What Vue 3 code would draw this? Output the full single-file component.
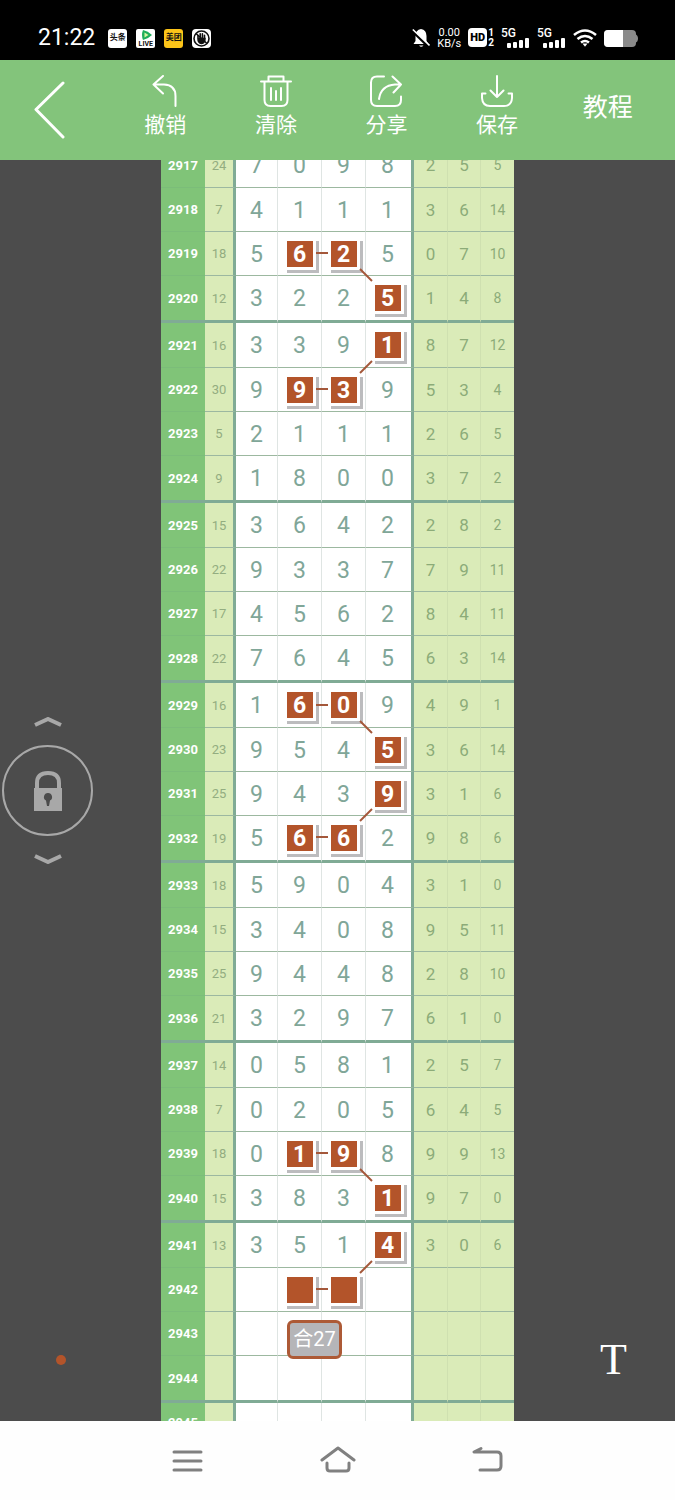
<script setup>
import { computed, ref } from 'vue'

const locked = ref(true)

// issue, sum, four drawn numbers, three side numbers
const draws = [
  ['2917', '24', '7098', ['2', '5', '5']],
  ['2918', '7', '4111', ['3', '6', '14']],
  ['2919', '18', '5625', ['0', '7', '10']],
  ['2920', '12', '3225', ['1', '4', '8']],
  ['2921', '16', '3391', ['8', '7', '12']],
  ['2922', '30', '9939', ['5', '3', '4']],
  ['2923', '5', '2111', ['2', '6', '5']],
  ['2924', '9', '1800', ['3', '7', '2']],
  ['2925', '15', '3642', ['2', '8', '2']],
  ['2926', '22', '9337', ['7', '9', '11']],
  ['2927', '17', '4562', ['8', '4', '11']],
  ['2928', '22', '7645', ['6', '3', '14']],
  ['2929', '16', '1609', ['4', '9', '1']],
  ['2930', '23', '9545', ['3', '6', '14']],
  ['2931', '25', '9439', ['3', '1', '6']],
  ['2932', '19', '5662', ['9', '8', '6']],
  ['2933', '18', '5904', ['3', '1', '0']],
  ['2934', '15', '3408', ['9', '5', '11']],
  ['2935', '25', '9448', ['2', '8', '10']],
  ['2936', '21', '3297', ['6', '1', '0']],
  ['2937', '14', '0581', ['2', '5', '7']],
  ['2938', '7', '0205', ['6', '4', '5']],
  ['2939', '18', '0198', ['9', '9', '13']],
  ['2940', '15', '3831', ['9', '7', '0']],
  ['2941', '13', '3514', ['3', '0', '6']],
  ['2942', '', '    ', ['', '', '']],
  ['2943', '', '    ', ['', '', '']],
  ['2944', '', '    ', ['', '', '']],
  ['2945', '', '    ', ['', '', '']]
]

// each trail is a list of [row, column] cells joined by short lines
const trails = [
  [[2, 1], [2, 2], [3, 3]],
  [[4, 3], [5, 2], [5, 1]],
  [[12, 1], [12, 2], [13, 3]],
  [[14, 3], [15, 2], [15, 1]],
  [[22, 1], [22, 2], [23, 3]],
  [[24, 3], [25, 2], [25, 1]]
]

const marked = new Set(trails.flat().map(([r, c]) => `${r}-${c}`))
const isMarked = (r, c) => marked.has(`${r}-${c}`)

const centerX = (c) => 95 + c * 44
const centerY = (r) => Math.floor(r / 4) * 180 + 22 + (r % 4) * 44

const links = computed(() =>
  trails.flatMap((t) =>
    t.slice(1).map(([r, c], i) => {
      const [pr, pc] = t[i]
      const mx = (centerX(c) + centerX(pc)) / 2
      const my = (centerY(r) + centerY(pr)) / 2
      const dx = 6 * Math.sign(c - pc)
      const dy = 6 * Math.sign(r - pr)
      return { x1: mx - dx, y1: my - dy, x2: mx + dx, y2: my + dy }
    })
  )
)
</script>

<template>
  <div class="screen">
    <header class="status">
      <div class="status-left">
        <span class="clock">21:22</span>
        <span class="app app-news">头条</span>
        <span class="app app-live">
          <svg viewBox="0 0 18 12" width="18" height="12">
            <path d="M6 1Q4 6 6 11Q11 10 15 6Q11 2 6 1Z" fill="#1fae5b" />
            <path d="M7.500 3.500V8.500L11.500 6Z" fill="#d8f5a0" />
          </svg>
          <span class="live-text">LIVE</span>
        </span>
        <span class="app app-shop">美团</span>
        <svg viewBox="0 0 19 19" width="19" height="19">
          <rect width="19" height="19" rx="4" fill="#fff" />
          <circle cx="9.500" cy="9.500" r="7.500" fill="#fff" stroke="#111" stroke-width="1.600" />
          <path d="M6 10V6.500M8.200 9V4.800M10.400 9V4.800M12.500 10V6.200M6 9.500Q6 14 9.500 14.500Q13 14 13 9.500Z" stroke="#111" stroke-width="1.600" fill="#111" stroke-linecap="round" />
          <path d="M4 4.500L15 14.500" stroke="#111" stroke-width="1.500" />
        </svg>
      </div>
      <div class="status-right">
        <svg viewBox="0 0 18 20" width="18" height="20">
          <path d="M9 1Q14.500 2 14.500 8V13L16.500 16H1.500L3.500 13V8Q3.500 2 9 1Z" fill="#fff" />
          <path d="M7 17.500H11.500Q9.200 20 7 17.500Z" fill="#fff" />
          <path d="M0 2.500L17 19" stroke="#000" stroke-width="3" />
          <path d="M.8 1.500L17.500 17.500" stroke="#fff" stroke-width="1.600" />
        </svg>
        <span class="speed"><span>0.00</span><span>KB/s</span></span>
        <span class="hd">
          <span class="hd-box">HD</span>
          <span class="hd-nums"><span>1</span><span>2</span></span>
        </span>
        <span v-for="n in 2" :key="n" class="signal">
          <span class="signal-text">5G</span>
          <svg viewBox="0 0 23 10" width="23" height="10">
            <g fill="#fff">
              <rect x="0" y="5" width="4" height="5" rx="1" />
              <rect x="6" y="4" width="4" height="6" rx="1" />
              <rect x="12" y="2" width="4" height="8" rx="1" />
              <rect x="18" y="0" width="4" height="10" rx="1" />
            </g>
          </svg>
        </span>
        <svg viewBox="0 0 24 18" width="24" height="18" fill="none" stroke="#fff" stroke-width="2.600">
          <path d="M1 6Q12 -3 23 6" />
          <path d="M4.500 10Q12 4 19.500 10" />
          <path d="M8 13.500Q12 10.500 16 13.500" />
          <path d="M9.500 14.500H14.500L12 17.800Z" fill="#fff" stroke="none" />
        </svg>
        <svg viewBox="0 0 34 17" width="34" height="17">
          <rect x="0" y="0" width="32" height="17" rx="4" fill="#8a8a8a" />
          <path d="M31 4Q34 5 34 8.500Q34 12 31 13Z" fill="#8a8a8a" />
          <path d="M4 0H19V17H4Q0 17 0 13V4Q0 0 4 0Z" fill="#fff" />
        </svg>
      </div>
    </header>

    <nav class="toolbar">
      <button class="back" aria-label="返回">
        <svg viewBox="0 0 32 58" width="32" height="58">
          <path d="M29 2L2 28.500L29 56" />
        </svg>
      </button>
      <button class="tool">
        <svg viewBox="0 0 32 32" width="32" height="32">
          <path d="M14 1L4.500 9.500L14 18.500M4.500 9.500H15Q26.500 10 26.500 21V31" />
        </svg>
        <span>撤销</span>
      </button>
      <button class="tool">
        <svg viewBox="0 0 32 32" width="32" height="32">
          <path d="M1 6.500H31M8.500 6.500V1.500H23.500V6.500M4.500 6.500V25Q4.500 31 10.500 31H21.500Q27.500 31 27.500 25V6.500M11 13V25M16 16V25M21 13V25" />
        </svg>
        <span>清除</span>
      </button>
      <button class="tool">
        <svg viewBox="0 0 32 32" width="32" height="32">
          <path d="M14 1.500H7Q1 1.500 1 7.500V25Q1 31 7 31H25Q31 31 31 25V21.500M22.500 1.500L31 9.500L23.500 17.500M31 9.500H25Q11 10.500 9 24" />
        </svg>
        <span>分享</span>
      </button>
      <button class="tool">
        <svg viewBox="0 0 32 32" width="32" height="32">
          <path d="M16 1V22M9.500 15.500L16 22L22.500 15.500M4.500 18.500H1V23Q1.500 31 9 31H23Q30.500 31 31 23V18.500H27.500" />
        </svg>
        <span>保存</span>
      </button>
      <button class="guide">教程</button>
    </nav>

    <main class="stage">
      <aside class="side side-left">
        <div class="lock">
          <button aria-label="向上">
            <svg viewBox="0 0 28 10" width="28" height="10"><path d="M1 8L14 2L27 8" /></svg>
          </button>
          <button class="lock-button" aria-label="锁定" :aria-pressed="locked" @click="locked = !locked">
            <svg viewBox="0 0 30 40" width="30" height="40">
              <path d="M4 17V12Q4 2 15 2Q26 2 26 12V17" />
              <rect x="1" y="17" width="28" height="23" fill="#a8a8a8" stroke="none" />
              <path d="M15 22A4 4 0 0 1 17 29.500L16 35H14L13 29.500A4 4 0 0 1 15 22Z" fill="#4c4c4c" stroke="none" />
            </svg>
          </button>
          <button aria-label="向下">
            <svg viewBox="0 0 28 10" width="28" height="10"><path d="M1 2L14 8L27 2" /></svg>
          </button>
        </div>
        <button class="color-dot" aria-label="颜色"></button>
      </aside>

      <section class="board">
        <table>
          <colgroup>
            <col class="w-issue" />
            <col class="w-sum" />
            <col class="w-first" />
            <col class="w-num" />
            <col class="w-num" />
            <col class="w-last" />
            <col class="w-extra" />
            <col />
            <col />
          </colgroup>
          <tbody>
            <tr v-for="(row, r) in draws" :key="row[0]">
              <th scope="row">{{ row[0] }}</th>
              <td class="sum">{{ row[1] }}</td>
              <td v-for="(n, c) in row[2]" :key="'n' + c" class="num">
                <span :class="isMarked(r, c) ? 'mark' : 'plain'">{{ n }}</span>
              </td>
              <td v-for="(n, c) in row[3]" :key="'e' + c" class="extra">{{ n }}</td>
            </tr>
          </tbody>
        </table>
        <svg class="links" viewBox="0 0 353 1320" width="353" height="1320">
          <line v-for="(l, i) in links" :key="i" v-bind="l" />
        </svg>
        <span class="note">合27</span>
      </section>

      <aside class="side side-right">
        <button class="text-tool" aria-label="文字">T</button>
      </aside>
    </main>

    <footer class="keys">
      <button aria-label="菜单">
        <svg viewBox="0 0 34 30" width="34" height="30"><path d="M3 6H30M3 15H30M3 24H30" /></svg>
      </button>
      <button aria-label="主页">
        <svg viewBox="0 0 36 30" width="36" height="30">
          <path d="M2 14L18 2L34 14M7 17V22Q7 25 10 25H26Q29 25 29 22V17" />
        </svg>
      </button>
      <button aria-label="返回上一页">
        <svg viewBox="0 0 34 30" width="34" height="30">
          <path d="M10 2.500L3 6H26Q30 6 30 10V20Q30 24 26 24H9" />
        </svg>
      </button>
    </footer>
  </div>
</template>

<style>
body {
  margin: 0;
}
</style>

<style scoped>
.screen {
  display: flex;
  flex-direction: column;
  height: 100vh;
  overflow: hidden;
  background: #4c4c4c;
  font-family: Roboto, 'Noto Sans CJK SC', sans-serif;
}

button {
  padding: 0;
  border: 0;
  background: none;
  color: inherit;
  font-family: inherit;
  cursor: pointer;
}

svg {
  display: block;
}

/* status bar */
.status {
  display: flex;
  justify-content: space-between;
  height: 60px;
  flex: none;
  box-sizing: border-box;
  padding: 16px 37px 0 38px;
  background: #000;
  color: #fff;
}

.status-left,
.status-right {
  display: flex;
  align-items: center;
}

.status-left {
  gap: 9px;
}

.status-right {
  gap: 7px;
}

.clock {
  margin-right: 4px;
  font-size: 23px;
  line-height: 28px;
}

.app {
  display: flex;
  flex-direction: column;
  align-items: center;
  justify-content: center;
  width: 19px;
  height: 19px;
  overflow: hidden;
  background: #fff;
  color: #111;
  font-size: 8px;
  font-weight: 700;
  line-height: 10px;
  white-space: nowrap;
}

.app-news {
  border-radius: 3px;
}

.app-live {
  border-radius: 2px;
}

.live-text {
  font-size: 7px;
  line-height: 7px;
}

.app-shop {
  border-radius: 3px;
  background: #fcc419;
}

.speed {
  display: flex;
  flex-direction: column;
  align-items: center;
  font-size: 11px;
  line-height: 11px;
}

.hd {
  display: flex;
  gap: 1px;
}

.hd-box {
  width: 19px;
  height: 19px;
  border-radius: 4px;
  background: #fff;
  color: #000;
  font-size: 11px;
  font-weight: 900;
  line-height: 19px;
  text-align: center;
}

.hd-nums {
  display: flex;
  flex-direction: column;
  font-size: 10px;
  font-weight: 700;
  line-height: 10px;
}

.signal {
  display: flex;
  flex-direction: column;
  width: 29px;
}

.signal svg {
  align-self: flex-end;
}

.signal-text {
  font-size: 12px;
  font-weight: 500;
  line-height: 10px;
}

/* toolbar */
.toolbar {
  display: flex;
  flex: none;
  height: 100px;
  box-sizing: border-box;
  padding-right: 12px;
  background: #83c47b;
  color: #fff;
}

.toolbar svg {
  fill: none;
  stroke: #fff;
  stroke-width: 2;
  stroke-linecap: round;
  stroke-linejoin: round;
}

.toolbar .back svg {
  stroke-width: 3;
}

.back {
  width: 110px;
  padding-left: 34px;
}

.tool {
  display: flex;
  flex: 1;
  flex-direction: column;
  align-items: center;
  justify-content: center;
  gap: 6px;
  padding-bottom: 8px;
  font-size: 21px;
  line-height: 24px;
}

.guide {
  flex: 1;
  padding-bottom: 4px;
  font-size: 25px;
  line-height: 30px;
}

/* stage */
.stage {
  display: flex;
  flex: 1;
  justify-content: center;
  min-height: 0;
  overflow: hidden;
}

.side {
  display: grid;
  flex: 1;
  grid-template-rows: 1fr auto 1fr;
}

.lock {
  display: flex;
  grid-row: 2;
  flex-direction: column;
  align-items: center;
  justify-self: start;
  gap: 18px;
  margin-left: 2px;
}

.lock svg {
  fill: none;
  stroke: #a8a8a8;
  stroke-width: 4;
}

.lock-button {
  display: flex;
  align-items: center;
  justify-content: center;
  width: 91px;
  height: 91px;
  border: 2px solid #a8a8a8;
  border-radius: 50%;
}

.color-dot {
  grid-row: 3;
  align-self: end;
  width: 10px;
  height: 10px;
  margin: 0 0 56px 56px;
  border-radius: 50%;
  background: #b3542a;
}

.text-tool {
  grid-row: 3;
  align-self: end;
  justify-self: end;
  margin: 0 48px 38px 0;
  color: #fff;
  font-family: 'Liberation Serif', serif;
  font-size: 44px;
  line-height: 46px;
}

/* chart */
.board {
  position: relative;
  flex: 0 1 353px;
  margin-top: -17px;
}

table {
  width: 100%;
  table-layout: fixed;
  border-collapse: separate;
  border-spacing: 0;
}

.w-issue {
  width: 44px;
}

.w-sum {
  width: 31px;
}

.w-first {
  width: 42px;
}

.w-num {
  width: 44px;
}

.w-last {
  width: 48px;
}

.w-extra {
  width: 34px;
}

th,
td {
  box-sizing: border-box;
  height: 44px;
  padding: 0;
  border-bottom: 1px solid #9cb8a0;
  text-align: center;
  vertical-align: middle;
}

tr:nth-child(4n + 1) > * {
  height: 45px;
}

tr:nth-child(4n) > * {
  height: 47px;
  border-bottom: 3px solid #80ab95;
}

tr:last-child > * {
  height: 40px;
}

th {
  border-bottom-color: #7bbd79;
  background: #80c478;
  color: #fff;
  font-size: 13px;
  font-weight: 700;
}

.sum {
  border-right: 3px solid #80ab95;
  background: #daebb8;
  color: #93ad80;
  font-size: 13px;
}

.num {
  border-right: 1px solid #dfe5e3;
  background: #fff;
  color: #80a698;
  font-size: 23px;
  line-height: 28px;
}

.num:nth-child(6) {
  padding-right: 2px;
  border-right: 3px solid #80ab95;
}

.extra {
  border-right: 1px solid #cfe0b0;
  background: #daebb8;
  color: #8cab78;
  font-size: 17px;
}

.extra:last-child {
  border-right: 0;
  font-size: 14px;
}

.plain,
.mark {
  display: block;
  height: 26px;
}

.mark {
  position: relative;
  width: 26px;
  margin: 0 auto;
  color: #fff;
  font-weight: 700;
  isolation: isolate;
}

.mark::before {
  content: '';
  position: absolute;
  inset: 0 -6px -6px 0;
  z-index: -1;
  border: solid #bcbcbe;
  border-width: 0 3px 3px 0;
  background: linear-gradient(#b3542a, #b3542a) 0 0 / 26px 26px no-repeat #fff;
}

.links {
  position: absolute;
  top: 0;
  left: 0;
  pointer-events: none;
}

.links line {
  stroke: #a4583a;
  stroke-width: 2;
}

.note {
  position: absolute;
  top: 1177px;
  left: 126px;
  box-sizing: border-box;
  width: 55px;
  height: 39px;
  border: 3px solid #ad5a36;
  border-radius: 6px;
  background: #b5b5b8;
  color: #fff;
  font-size: 20px;
  line-height: 33px;
  text-align: center;
  white-space: nowrap;
}

/* system keys */
.keys {
  display: flex;
  flex: none;
  justify-content: center;
  height: 79px;
  background: #fefefe;
}

.keys button {
  display: flex;
  align-items: center;
  justify-content: center;
  width: 150px;
}

.keys svg {
  fill: none;
  stroke: #808080;
  stroke-width: 3;
  stroke-linecap: round;
  stroke-linejoin: round;
}
</style>
